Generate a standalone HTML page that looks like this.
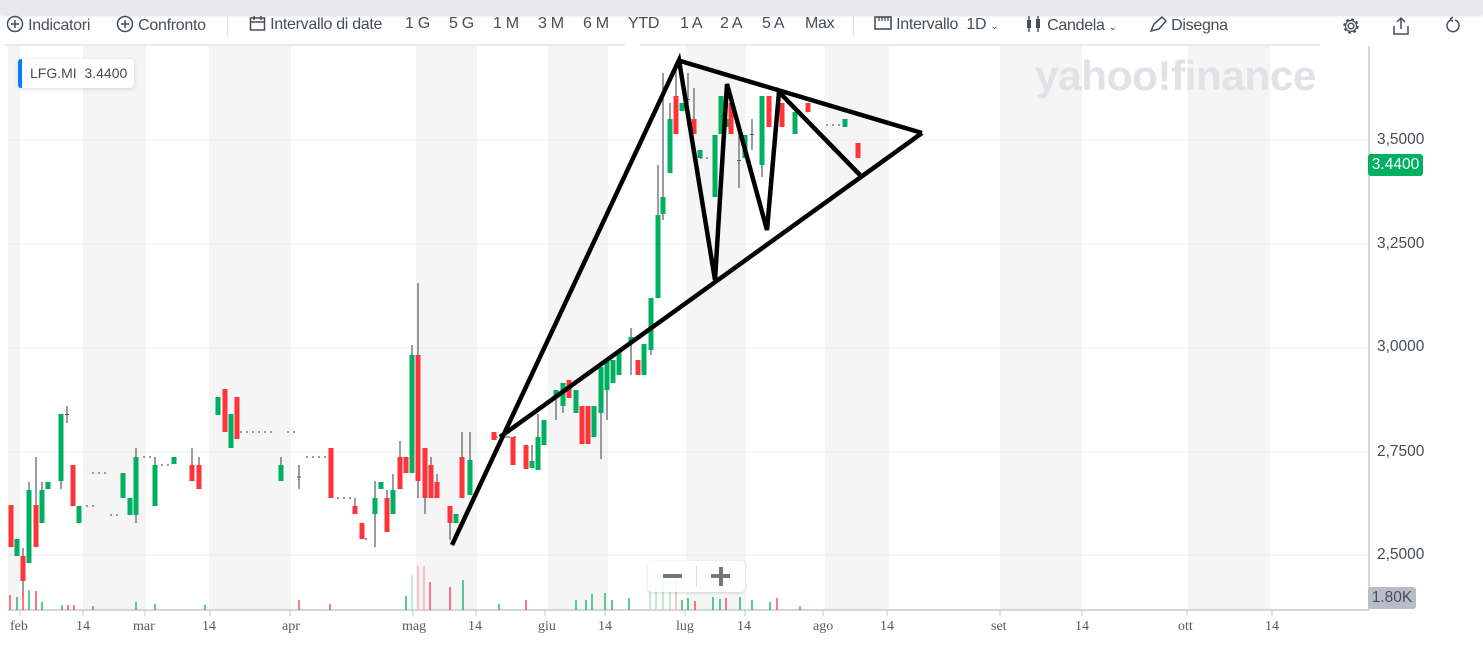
<!DOCTYPE html>
<html><head><meta charset="utf-8"><style>
body{margin:0;width:1483px;height:653px;background:#fff;overflow:hidden;font-family:"Liberation Sans",Arial,sans-serif;position:relative}
.top{position:absolute;left:0;top:0;width:1483px;height:14px;background:#e9e8ee;box-shadow:0 2px 3px rgba(0,0,0,.12)}
.tb{position:absolute;top:15px;height:22px;font-size:16px;color:#464e56;white-space:nowrap;letter-spacing:-0.3px}
.lbl{position:absolute;left:18px;top:59px;width:116px;height:29px;background:#fff;border-radius:4px;box-shadow:0 1px 4px rgba(0,0,0,.15);font-size:14px;color:#464e56;line-height:29px}
.lbl:before{content:"";position:absolute;left:0;top:0;width:4px;height:29px;background:#0a7cff;border-radius:3px 0 0 3px}
.xl{position:absolute;top:619px;font-family:"Liberation Serif",serif;font-size:14px;color:#5a5a5a}
.yl{position:absolute;left:1377px;font-size:15.5px;color:#464e56}
</style></head><body>
<div class="top"></div>
<div class="tb" style="left:6px"><svg width="18" height="18" style="vertical-align:-3px" viewBox="0 0 18 18"><circle cx="9" cy="9" r="7.5" fill="none" stroke="#464e56" stroke-width="1.5"/><path d="M9 5v8M5 9h8" stroke="#464e56" stroke-width="1.5"/></svg> Indicatori</div>
<div class="tb" style="left:116px"><svg width="18" height="18" style="vertical-align:-3px" viewBox="0 0 18 18"><circle cx="9" cy="9" r="7.5" fill="none" stroke="#464e56" stroke-width="1.5"/><path d="M9 5v8M5 9h8" stroke="#464e56" stroke-width="1.5"/></svg> Confronto</div>
<div style="position:absolute;left:227px;top:16px;width:1px;height:20px;background:#ddd"></div>
<div class="tb" style="left:249px"><svg width="17" height="17" style="vertical-align:-3px" viewBox="0 0 17 17"><rect x="1.5" y="3" width="14" height="12" fill="none" stroke="#464e56" stroke-width="1.5"/><path d="M1.5 7h14M5 1v4M12 1v4" stroke="#464e56" stroke-width="1.5"/></svg> Intervallo di date</div>
<div class="tb" style="left:405px">1 G</div><div class="tb" style="left:449px">5 G</div><div class="tb" style="left:493px">1 M</div><div class="tb" style="left:538px">3 M</div><div class="tb" style="left:583px">6 M</div><div class="tb" style="left:628px">YTD</div><div class="tb" style="left:680px">1 A</div><div class="tb" style="left:720px">2 A</div><div class="tb" style="left:762px">5 A</div><div class="tb" style="left:805px">Max</div>
<div style="position:absolute;left:853px;top:16px;width:1px;height:20px;background:#ddd"></div>
<div class="tb" style="left:874px"><svg width="18" height="16" style="vertical-align:-2px" viewBox="0 0 18 16"><rect x="1" y="2" width="16" height="12" fill="none" stroke="#464e56" stroke-width="1.6"/><path d="M5 2v4M8 2v4M11 2v4M14 2v4" stroke="#464e56" stroke-width="1.3"/></svg> Intervallo&nbsp; 1D <span style="font-size:10px">&#8964;</span></div>
<div class="tb" style="left:1025px"><svg width="18" height="18" style="vertical-align:-3px" viewBox="0 0 18 18"><path d="M4 1v16M13 1v16" stroke="#464e56" stroke-width="1.4"/><rect x="2" y="5" width="4" height="8" fill="#464e56"/><rect x="11" y="4" width="4" height="9" fill="#464e56"/></svg> Candela <span style="font-size:10px">&#8964;</span></div>
<div class="tb" style="left:1149px"><svg width="18" height="18" style="vertical-align:-3px" viewBox="0 0 18 18"><path d="M2 16l3-7 8-7 4 4-7 8z" fill="none" stroke="#464e56" stroke-width="1.5"/></svg> Disegna</div>
<svg style="position:absolute;left:1341px;top:16px" width="20" height="20" viewBox="0 0 20 20"><circle cx="10" cy="10" r="2.8" fill="none" stroke="#464e56" stroke-width="1.5"/><circle cx="10" cy="10" r="6.5" fill="none" stroke="#464e56" stroke-width="2.4" stroke-dasharray="2.6 2.5"/><circle cx="10" cy="10" r="5.5" fill="none" stroke="#464e56" stroke-width="1.2"/></svg>
<svg style="position:absolute;left:1392px;top:16px" width="18" height="20" viewBox="0 0 18 20"><path d="M9 2v11M5 6l4-4 4 4M2 10v8h14v-8" fill="none" stroke="#464e56" stroke-width="1.5"/></svg>
<svg style="position:absolute;left:1444px;top:16px" width="18" height="20" viewBox="0 0 18 20"><path d="M6 3l3-2M6 3l3 2.5M7 4a6 6 0 1 0 4 0" fill="none" stroke="#464e56" stroke-width="1.5"/></svg>
<svg id="c" style="position:absolute;left:0;top:0" width="1483" height="653"></svg>
<div style="position:absolute;left:1035px;top:52px;font-size:42px;font-weight:bold;color:#e1e2e6;letter-spacing:-0.5px;transform:scaleX(1.01);transform-origin:left">yahoo!finance</div>
<div class="lbl"><span style="padding-left:12px">LFG.MI&nbsp; 3.4400</span></div>
<div class="yl" style="top:131px">3,5000</div><div class="yl" style="top:235px">3,2500</div><div class="yl" style="top:338px">3,0000</div><div class="yl" style="top:443px">2,7500</div><div class="yl" style="top:546px">2,5000</div>
<div style="position:absolute;left:1368px;top:154px;width:55px;height:22px;background:#00b061;border-radius:3px;color:#fff;font-size:15.5px;line-height:22px;text-align:center">3.4400</div>
<div style="position:absolute;left:1368px;top:587px;width:48px;height:22px;background:#b8bcc7;border-radius:3px;color:#464e56;font-size:15.5px;line-height:22px;text-align:center">1.80K</div>
<div style="position:absolute;left:648px;top:561px;width:97px;height:31px;background:rgba(255,255,255,.85);border-radius:4px;box-shadow:0 1px 3px rgba(0,0,0,.15)"><div style="position:absolute;left:15px;top:13px;width:19px;height:4px;background:#777"></div><div style="position:absolute;left:48px;top:5px;width:1px;height:21px;background:#ddd"></div><div style="position:absolute;left:63px;top:13px;width:19px;height:4px;background:#777"></div><div style="position:absolute;left:70.5px;top:5.5px;width:4px;height:19px;background:#777"></div></div>
<div class="xl" style="left:10px">feb</div><div class="xl" style="left:76px">14</div><div class="xl" style="left:133px">mar</div><div class="xl" style="left:202px">14</div><div class="xl" style="left:282px">apr</div><div class="xl" style="left:402px">mag</div><div class="xl" style="left:468px">14</div><div class="xl" style="left:538px">giu</div><div class="xl" style="left:598px">14</div><div class="xl" style="left:676px">lug</div><div class="xl" style="left:737px">14</div><div class="xl" style="left:813px">ago</div><div class="xl" style="left:880px">14</div><div class="xl" style="left:991px">set</div><div class="xl" style="left:1075px">14</div><div class="xl" style="left:1178px">ott</div><div class="xl" style="left:1265px">14</div>
<script>
var s='';
function R(x,y,w,h,c){s+='<rect x="'+x+'" y="'+y+'" width="'+w+'" height="'+h+'" fill="'+c+'"/>';}
function L(x1,y1,x2,y2,c,w){s+='<line x1="'+x1+'" y1="'+y1+'" x2="'+x2+'" y2="'+y2+'" stroke="'+c+'" stroke-width="'+w+'"/>';}
[[8,20],[83,146],[209,291],[416,477],[548,608],[686,746],[825,889],[1000,1082],[1188,1270]].forEach(function(b){R(b[0],46,b[1]-b[0],564,'#f5f5f5');});
[140,244,348,452,555].forEach(function(y){L(8,y,1369,y,'#ececec',1);});
L(5,45,625,45,'#e3e3e3',1.5);L(640,45,1320,45,'#e3e3e3',1.5);
L(1369,46,1369,610,'#c6c8cc',1.5);L(8,610,1369,610,'#c6c8cc',1.5);
[20,83,145,210,290,413,476,545,605,685,745,823,887,1000,1082,1187,1272].forEach(function(x){L(x,610,x,616,'#c6c8cc',1);});
var G='#00b061',Rd='#ff333a',W='#555c66';
var c=[[11,505,547,Rd],[17,539,556,G],[23,556,581,Rd,548,597],[29,490,563,G,482],[36,505,547,Rd,457],[42,490,523,G,482],[48,482,489,G],[61,414,481,G,0,489],[67,406,423,'d'],[73,465,506,Rd],[79,506,523,G],[123,473,498,G],[130,498,515,G],[136,457,515,G,448,523],[155,465,506,G,457],[174,457,464,G],[192,465,481,Rd,448],[199,465,489,Rd,457],[218,397,415,G],[225,389,432,Rd],[231,414,448,G],[237,397,439,Rd],[281,465,481,G,457],[299,465,489,'d'],[331,448,498,Rd],[355,506,514,Rd,498],[362,523,539,Rd],[375,498,514,G,481,547],[381,482,489,G],[387,498,532,Rd,490],[393,490,514,G,474],[400,457,489,Rd,441],[406,457,473,Rd],[412,355,473,G,345],[418,355,481,Rd,283,498],[425,448,498,Rd,0,514],[431,465,498,Rd,457],[437,482,498,Rd,474],[450,506,523,Rd,0,540],[456,514,523,G],[462,457,498,Rd,432],[470,460,495,G,432],[494,432,440,Rd],[506,437,437,'d'],[513,437,465,Rd],[526,445,469,Rd],[532,461,468,G,445],[538,437,470,G,414],[544,420,445,G],[556,390,398,G,0,420],[563,383,406,G,0,413],[569,380,398,Rd],[576,390,413,G],[582,406,444,Rd],[588,406,444,Rd],[594,406,437,G],[601,367,413,G,0,459],[607,360,390,G,0,420],[613,360,383,G],[619,352,375,G],[631,337,343,G,328,375],[638,360,375,Rd],[644,344,375,G],[651,298,350,G,0,355],[658,215,298,G,165],[663,197,214,G,73,220],[670,119,173,G,103],[676,96,134,Rd,68],[682,103,111,G],[688,73,126,'d'],[694,119,134,Rd,88],[700,150,158,G],[715,135,197,G],[721,96,134,G],[727,119,127,G],[731,103,134,Rd],[739,133,188,'d'],[745,135,158,G],[752,119,150,'d'],[762,96,165,G,0,177],[769,96,127,Rd],[782,103,127,Rd],[795,112,134,G],[808,103,112,Rd],[845,119,127,G],[858,143,158,Rd]];
c.forEach(function(k){var x=k[0],col=k[3];if(col=='d'){L(x,k[1],x,k[2],W,1.2);L(x-2,(k[1]+k[2])/2,x+2,(k[1]+k[2])/2,W,1);return;}
 if(k[4]||k[5]){L(x,k[4]||k[1],x,k[5]||k[2],W,1.2);}R(x-2.5,k[1],5,Math.max(2,k[2]-k[1]),col);});
[[86,98,506],[92,105,473],[110,118,515],[143,150,457],[161,170,465],[240,275,432],[287,295,432],[306,325,457],[337,350,498],[365,370,539],[496,520,437],[700,712,158],[826,850,125]].forEach(function(d){for(var x=d[0];x<d[1];x+=6)L(x,d[2],x+2,d[2],W,1.2);});
var v=[[10,595,Rd],[17,597,G],[23,592,Rd],[29,590,G],[36,591,Rd],[42,602,G],[62,605,G],[68,605,Rd],[74,605,Rd],[93,606,G],[136,602,G],[155,604,G],[205,605,G],[299,600,Rd],[330,604,Rd],[406,596,G],[412,575,'#9fe0c0'],[418,566,'#f7a8aa'],[424,566,'#f7a8aa'],[430,582,Rd],[450,587,Rd],[463,580,G],[499,604,G],[526,600,Rd],[576,600,G],[586,600,G],[592,594,G],[605,593,G],[612,600,G],[629,598,G],[650,578,'#9fe0c0'],[656,574,'#9fe0c0'],[663,574,'#9fe0c0'],[670,578,'#9fe0c0'],[676,577,'#f7a8aa'],[682,600,G],[688,598,G],[695,601,Rd],[713,597,G],[720,599,G],[726,598,Rd],[740,597,G],[752,600,G],[770,602,G],[777,598,Rd],[800,606,G]];
v.forEach(function(k){L(k[0],k[1],k[0],610,k[2],1.3);});
var B='#000';
s+='<polyline points="452,545 679,60 715,280 727,84 767,230 779,92 860,175" fill="none" stroke="#000" stroke-width="4.5" stroke-linejoin="miter"/>';
L(500,437,922,133,B,4.5);L(677,60,922,133,B,4.5);
document.getElementById('c').innerHTML=s;
</script>
</body></html>
